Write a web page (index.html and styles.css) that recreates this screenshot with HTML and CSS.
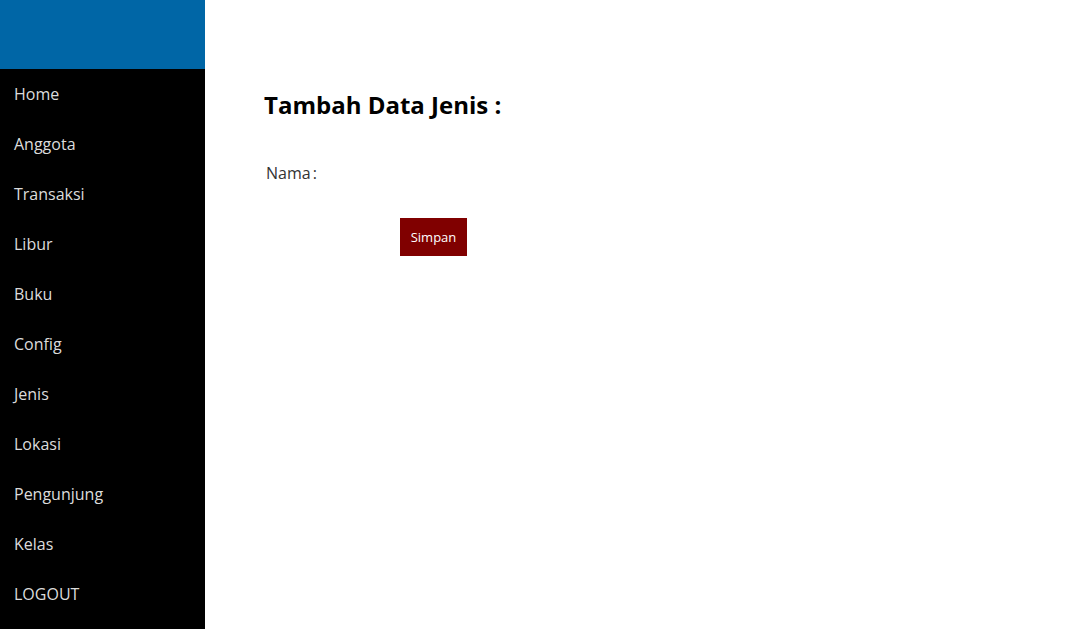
FILE: index.html
```html
<!DOCTYPE html>
<html>
<head>
<meta charset="utf-8">
<link rel="stylesheet" href="styles.css">
</head>
<body>
<div class="layout">
  <aside class="sidebar">
    <div class="brand"></div>
    <nav class="menu">
      <a href="#">Home</a>
      <a href="#">Anggota</a>
      <a href="#">Transaksi</a>
      <a href="#">Libur</a>
      <a href="#">Buku</a>
      <a href="#">Config</a>
      <a href="#">Jenis</a>
      <a href="#">Lokasi</a>
      <a href="#">Pengunjung</a>
      <a href="#">Kelas</a>
      <a href="#">LOGOUT</a>
    </nav>
  </aside>
  <main class="content">
    <h2 class="title">Tambah Data Jenis :</h2>
    <form class="form">
      <div class="row">
        <span class="label">Nama</span><span class="colon">:</span>
      </div>
      <div class="actions">
        <button type="button" class="btn">Simpan</button>
      </div>
    </form>
  </main>
</div>
</body>
</html>
```

FILE: styles.css
```css
html, body {
  margin: 0;
  padding: 0;
  background: #fff;
  font-family: "Open Sans", "Liberation Sans", sans-serif;
}
.layout {
  display: flex;
  min-height: 629px;
}
.sidebar {
  width: 205px;
  flex: none;
  background: #000;
  display: flex;
  flex-direction: column;
}
.brand {
  height: 69px;
  background: #0066a6;
}
.menu {
  display: flex;
  flex-direction: column;
}
.menu a {
  display: flex;
  align-items: center;
  height: 50px;
  padding-left: 14px;
  color: #dcdcdc;
  text-decoration: none;
  font-size: 16px;
}
.content {
  flex: 1;
  padding: 82px 0 0 59px;
}
.title {
  margin: 0;
  font-size: 24px;
  font-weight: 700;
  color: #000;
  line-height: 46px;
}
.form {
  margin-top: 33px;
}
.row {
  display: flex;
  align-items: center;
  height: 24px;
  padding-left: 2px;
  font-size: 16px;
  color: #333;
}
.colon {
  margin-left: 2px;
}
.actions {
  margin-top: 33px;
  padding-left: 136px;
}
.btn {
  display: block;
  width: 67px;
  height: 38px;
  border: none;
  background: #800000;
  color: #fff;
  font-family: "Open Sans", "Liberation Sans", sans-serif;
  font-size: 13px;
  padding: 0;
}
```
